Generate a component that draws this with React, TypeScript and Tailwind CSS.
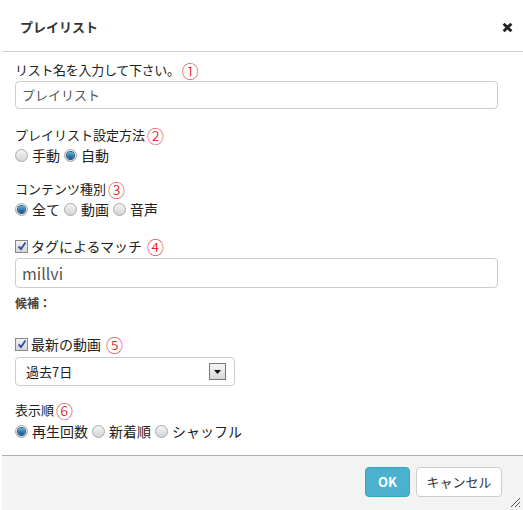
import React from "react";

const Num = ({ n }: { n: string }) => (
  <span className="ml-[2px] text-[17px] font-light leading-none text-[#e00000]">{n}</span>
);

const Radio = ({ checked }: { checked?: boolean }) => (
  <span className="inline-flex h-[13px] w-[13px] items-center justify-center rounded-full border border-[#a8a8a8] bg-gradient-to-b from-[#f4f4f4] to-[#d4d4d4]">
    {checked && (
      <span className="h-[7px] w-[7px] rounded-full bg-gradient-to-b from-[#5fb0e0] to-[#0b4f85] ring-1 ring-[#2a5a80]" />
    )}
  </span>
);

const Check = () => (
  <span className="inline-flex h-[13px] w-[13px] items-center justify-center border border-[#8a8a8a] bg-gradient-to-b from-[#f2f2f2] to-[#d6d6d6]">
    <svg width="10" height="10" viewBox="0 0 10 10">
      <path d="M1.5 5.5 L4 8 L8.5 1.5" stroke="#2c4fa8" strokeWidth="1.8" fill="none" />
    </svg>
  </span>
);

const Option = ({ label, checked }: { label: string; checked?: boolean }) => (
  <label className="mr-[4px] inline-flex items-center gap-[4px]">
    <Radio checked={checked} />
    <span>{label}</span>
  </label>
);

export default function App() {
  return (
    <div
      className="relative h-[510px] w-[523px] overflow-hidden bg-white text-[13px] text-[#222]"
      style={{ fontFamily: '"Noto Sans CJK JP", "Noto Sans", sans-serif' }}
    >
      <div className="ml-[2px] flex h-[52px] items-center justify-between border-b border-[#cfcfcf] pl-[18px] pr-[10px] pt-[3px]">
        <span className="text-[13px] font-bold text-[#333]">プレイリスト</span>
        <svg width="11" height="11" viewBox="0 0 10 10">
          <path d="M1.5 1.5 L8.5 8.5 M8.5 1.5 L1.5 8.5" stroke="#222" strokeWidth="2.6" />
        </svg>
      </div>

      <div className="px-[15px] pt-[8px]">
        <div className="flex h-[20px] items-center">
          <span className="tracking-[-0.3px]">リスト名を入力して下さい。</span>
          <Num n="①" />
        </div>
        <div className="mt-[1px] flex h-[28px] w-[483px] items-center rounded-[4px] border border-[#cccccc] px-[6px] text-[13px] text-[#555]">
          プレイリスト
        </div>

        <div className="mt-[16px] flex h-[20px] items-center">
          プレイリスト設定方法<Num n="②" />
        </div>
        <div className="flex h-[20px] items-center text-[14px]">
          <Option label="手動" />
          <Option label="自動" checked />
        </div>

        <div className="mt-[14px] flex h-[20px] items-center">
          コンテンツ種別<Num n="③" />
        </div>
        <div className="flex h-[20px] items-center text-[14px]">
          <Option label="全て" checked />
          <Option label="動画" />
          <Option label="音声" />
        </div>

        <div className="mt-[16px] flex h-[22px] items-center gap-[3px] text-[14px]">
          <Check />
          <span>タグによるマッチ</span>
          <Num n="④" />
        </div>
        <div className="mt-[1px] flex h-[30px] w-[483px] items-center rounded-[4px] border border-[#cccccc] px-[6px] text-[16px] text-[#555]">
          millvi
        </div>
        <div className="mt-[5px] flex h-[20px] items-center text-[12px] font-bold text-[#444]">
          候補：
        </div>

        <div className="mt-[20px] flex h-[22px] items-center gap-[3px] text-[14px]">
          <Check />
          <span>最新の動画</span>
          <Num n="⑤" />
        </div>
        <div className="mt-[2px] flex h-[29px] w-[220px] items-center justify-between rounded-[4px] border border-[#cccccc] pl-[10px] pr-[8px] text-[13px] text-[#222]">
          <span>過去7日</span>
          <span className="flex h-[17px] w-[17px] items-center justify-center border border-[#777] bg-gradient-to-b from-[#f6f6f6] to-[#d8d8d8]">
            <svg width="7" height="4" viewBox="0 0 7 4">
              <path d="M0 0 L7 0 L3.5 4 Z" fill="#111" />
            </svg>
          </span>
        </div>

        <div className="mt-[14px] flex h-[20px] items-center">
          表示順<Num n="⑥" />
        </div>
        <div className="flex h-[22px] items-center text-[14px]">
          <Option label="再生回数" checked />
          <Option label="新着順" />
          <Option label="シャッフル" />
        </div>
      </div>

      <div className="absolute bottom-0 left-[2px] right-0 flex h-[55px] items-start justify-end gap-[6px] border-t border-[#b0b0b0] bg-[#f3f3f3] pr-[21px] pt-[11px]">
        <button className="h-[30px] w-[45px] rounded-[4px] border border-[#3aa3bf] bg-[#4bb1cf] text-[13px] font-bold text-white">
          OK
        </button>
        <button className="h-[30px] w-[86px] rounded-[4px] border border-[#cccccc] bg-white text-[13px] text-[#333]">
          キャンセル
        </button>
        <svg className="absolute bottom-[2px] right-[2px]" width="12" height="12" viewBox="0 0 12 12">
          <path d="M11 2 L2 11 M11 6 L6 11 M11 10 L10 11" stroke="#555" strokeWidth="1" />
        </svg>
      </div>
    </div>
  );
}
